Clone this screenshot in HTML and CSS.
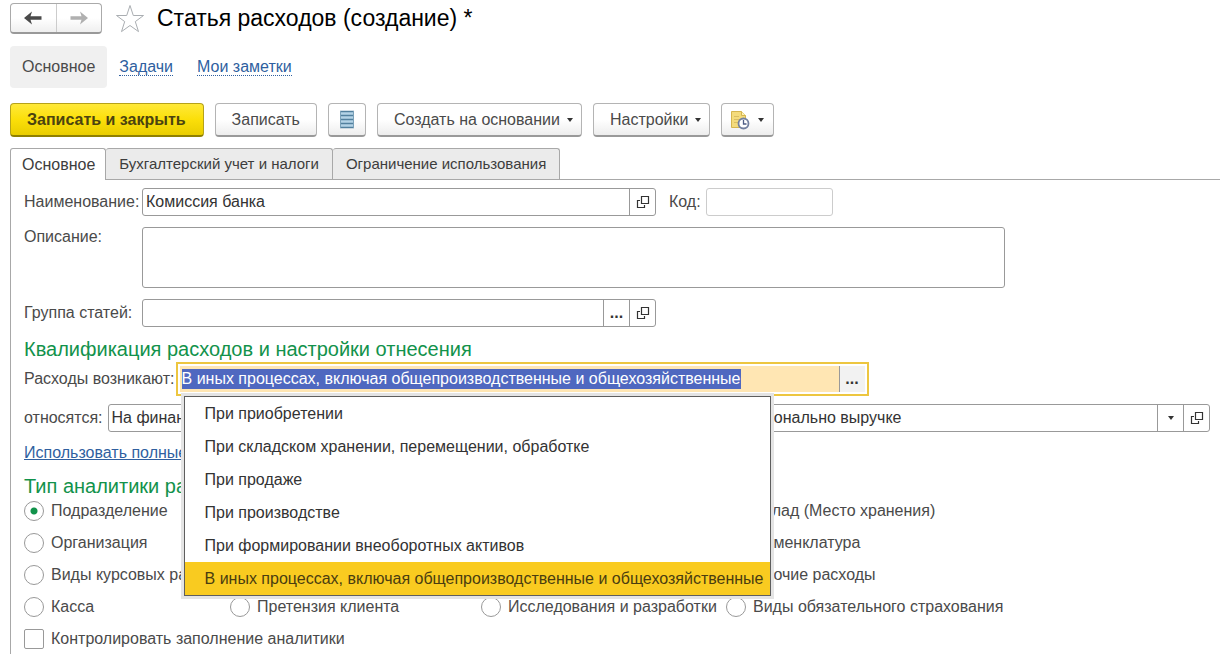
FILE: index.html
```html
<!DOCTYPE html>
<html lang="ru">
<head>
<meta charset="utf-8">
<title>Статья расходов (создание)</title>
<link rel="stylesheet" href="styles.css">
</head>
<body>
<svg class="sprite" aria-hidden="true">
  <symbol id="open" viewBox="0 0 14 14"><path d="M5.500 1.500h7v7h-7zM4 5.500H1.500v7h7V10" fill="none" stroke="#333" stroke-width="1.200"/></symbol>
  <symbol id="caret" viewBox="0 0 8 6"><path d="M1 1h6L4 5z" fill="#333"/></symbol>
</svg>

<header class="titlebar">
  <div class="history">
    <button class="history-btn" type="button" aria-label="Назад">
      <svg width="18" height="14" viewBox="0 0 18 14"><path d="M0 7l8-6.500L6.500 5.300h11v3.400h-11L8 13.500z" fill="#4a4a4a"/></svg>
    </button>
    <button class="history-btn" type="button" aria-label="Вперед">
      <svg width="18" height="14" viewBox="0 0 18 14"><path d="M18 7l-8-6.500 1.500 4.800H.5v3.400h11L10 13.500z" fill="#b0b0b0"/></svg>
    </button>
  </div>
  <button class="star" type="button" aria-label="В избранное">
    <svg width="30" height="29" viewBox="0 0 30 29"><path d="M15 1.500l3.300 10H28.500l-8.200 6.100 3.200 10L15 21.500l-8.500 6.100 3.200-10L1.500 11.500h10.200z" fill="#fff" stroke="#aaaeb2"/></svg>
  </button>
  <h1 class="title">Статья расходов (создание) *</h1>
</header>

<nav class="sections">
  <span class="section-current">Основное</span>
  <a class="section-link" href="#tasks">Задачи</a>
  <a class="section-link" href="#notes">Мои заметки</a>
</nav>

<div class="toolbar">
  <button class="btn btn-primary" type="button">Записать и закрыть</button>
  <button class="btn" type="button">Записать</button>
  <button class="btn btn-icon" type="button" aria-label="Журнал">
    <svg width="14" height="19" viewBox="0 0 14 19"><path d="M1 1h12v17H1z" fill="#b4d3e6"/><path d="M0 1.500h14M0 5.500h14M0 9.500h14M0 13.500h14M0 17.500h14" stroke="#52809e" stroke-width="1.500"/><path d="M.5 1v17M13.500 1v17" stroke="#7ba1b9"/></svg>
  </button>
  <button class="btn btn-menu" type="button">Создать на основании <svg class="caret"><use href="#caret"/></svg></button>
  <button class="btn btn-menu" type="button">Настройки <svg class="caret"><use href="#caret"/></svg></button>
  <button class="btn btn-history" type="button" aria-label="История">
    <svg width="20" height="20" viewBox="0 0 20 20"><path d="M1.500 1.500h10l4 4v12h-14z" fill="#f4db7c" stroke="#d5b54f"/><path d="M11.500 1.500v4h4" fill="#fff3b5" stroke="#d5b54f"/><path d="M4 6.500h5M4 9.500h6M4 12.500h4" stroke="#d9bd62"/><circle cx="13.500" cy="13.500" r="5" fill="#fff" stroke="#73809f" stroke-width="1.800"/><path d="M13.500 10v4h3" fill="none" stroke="#4d5c83" stroke-width="1.300"/></svg>
    <svg class="caret"><use href="#caret"/></svg>
  </button>
</div>

<div class="tabs" role="tablist">
  <button class="tab tab-active" type="button" role="tab" aria-selected="true">Основное</button>
  <button class="tab" type="button" role="tab">Бухгалтерский учет и налоги</button>
  <button class="tab" type="button" role="tab">Ограничение использования</button>
</div>

<main class="panel">
  <div class="row">
    <label class="label label-main" for="name">Наименование:</label>
    <div class="field field-mid">
      <input class="input" id="name" type="text" value="Комиссия банка">
      <button class="cell" type="button" aria-label="Открыть"><svg class="open"><use href="#open"/></svg></button>
    </div>
    <label class="label label-code" for="code">Код:</label>
    <div class="field field-code"><input class="input" id="code" type="text"></div>
  </div>
  <div class="row row-top">
    <label class="label label-main" for="desc">Описание:</label>
    <textarea class="memo" id="desc"></textarea>
  </div>
  <div class="row">
    <label class="label label-main" for="group">Группа статей:</label>
    <div class="field field-mid">
      <input class="input" id="group" type="text">
      <button class="cell dots" type="button" aria-label="Выбрать">...</button>
      <button class="cell" type="button" aria-label="Открыть"><svg class="open"><use href="#open"/></svg></button>
    </div>
  </div>

  <h2 class="heading">Квалификация расходов и настройки отнесения</h2>
  <div class="row row-origin">
    <label class="label" for="origin">Расходы возникают:</label>
    <div class="focus">
      <div class="focus-body">
        <input class="input input-focus" id="origin" type="text" value="В иных процессах, включая общепроизводственные и общехозяйственные">
        <button class="cell dots cell-focus" type="button" aria-label="Выбрать">...</button>
      </div>
      <ul class="popup" role="listbox">
        <li class="option" role="option">При приобретении</li>
        <li class="option" role="option">При складском хранении, перемещении, обработке</li>
        <li class="option" role="option">При продаже</li>
        <li class="option" role="option">При производстве</li>
        <li class="option" role="option">При формировании внеоборотных активов</li>
        <li class="option option-current" role="option" aria-selected="true">В иных процессах, включая общепроизводственные и общехозяйственные</li>
      </ul>
    </div>
  </div>
  <div class="row">
    <label class="label" for="target">относятся:</label>
    <div class="field field-grow"><input class="input" id="target" type="text" value="На финансовый результат"></div>
    <div class="field field-mid">
      <input class="input" type="text" aria-label="Правило" value="Пропорционально выручке">
      <button class="cell" type="button" aria-label="Список"><svg class="caret"><use href="#caret"/></svg></button>
      <button class="cell" type="button" aria-label="Открыть"><svg class="open"><use href="#open"/></svg></button>
    </div>
  </div>
  <a class="full-link" href="#full">Использовать полные</a>

  <h2 class="heading heading-type">Тип аналитики ра</h2>
  <div class="choices">
    <label class="choice c1"><input class="radio" type="radio" name="kind" checked>Подразделение</label>
    <label class="choice c4"><input class="radio" type="radio" name="kind">Склад (Место хранения)</label>
    <label class="choice c1"><input class="radio" type="radio" name="kind">Организация</label>
    <label class="choice c4"><input class="radio" type="radio" name="kind">Номенклатура</label>
    <label class="choice c1"><input class="radio" type="radio" name="kind">Виды курсовых разниц</label>
    <label class="choice c4"><input class="radio" type="radio" name="kind">Прочие расходы</label>
    <label class="choice c1"><input class="radio" type="radio" name="kind">Касса</label>
    <label class="choice c2"><input class="radio" type="radio" name="kind">Претензия клиента</label>
    <label class="choice c3"><input class="radio" type="radio" name="kind">Исследования и разработки</label>
    <label class="choice c4"><input class="radio" type="radio" name="kind">Виды обязательного страхования</label>
  </div>
  <label class="choice"><input class="check" type="checkbox">Контролировать заполнение аналитики</label>
</main>
<script src="app.js"></script>
</body>
</html>
```
FILE: styles.css
```css
* { box-sizing: border-box; }
body {
  margin: 0;
  min-height: 100vh;
  display: flex;
  flex-direction: column;
  background: #fff;
  color: #4a4a4a;
  font: 16px/20px "Liberation Sans", Arial, sans-serif;
}
button, input, textarea { font: inherit; color: inherit; margin: 0; }
button { cursor: pointer; }
.sprite { position: absolute; width: 0; height: 0; }
.caret { width: 8px; height: 6px; flex: none; }
.open { width: 14px; height: 14px; }

.titlebar { display: flex; align-items: center; padding: 3px 10px 0; height: 34px; }
.history {
  display: flex;
  width: 92px;
  height: 31px;
  border: 1px solid #aaa;
  border-bottom: 2px solid #999;
  border-radius: 4px;
  background: linear-gradient(#fff 50%, #efefef);
}
.history-btn {
  flex: 1;
  display: flex;
  align-items: center;
  justify-content: center;
  padding: 0;
  border: 0;
  background: none;
}
.history-btn + .history-btn { border-left: 1px solid #ccc; }
.star { display: flex; margin: 0 12px 0 13px; padding: 0; border: 0; background: none; }
.title { margin: 0; padding-bottom: 2px; font-size: 23px; line-height: 28px; font-weight: 400; color: #000; }

.sections { display: flex; align-items: center; gap: 24px; margin: 12px 10px 0; }
.section-current { margin-right: -12px; padding: 11px 12px; border-radius: 4px; background: #f0f0f0; }
.section-link { color: #2f5f9f; text-decoration: none; border-bottom: 1px dotted #2f5f9f; line-height: 17px; }

.toolbar { display: flex; gap: 11px; margin: 15px 10px 0; }
.btn {
  display: flex;
  align-items: center;
  justify-content: center;
  height: 34px;
  padding: 0 16px;
  border: 1px solid #b4b4b4;
  border-bottom: 2px solid #999;
  border-radius: 4px;
  background: linear-gradient(#fff 50%, #ededed);
  white-space: nowrap;
}
.btn-primary {
  padding-right: 17px;
  border-color: #b5a21a #b5a21a #8f8000;
  background: linear-gradient(#ffe939, #fbdf09 50%, #e9cd00);
  color: #4b4310;
  font-weight: 700;
}
.btn-icon { width: 38px; padding: 0; }
.btn-menu { padding-right: 7px; gap: 6px; }
.btn-history { padding: 0 8px; gap: 7px; }

.tabs { display: flex; margin-top: 11px; margin-left: 10px; border-bottom: 1px solid #a8a8a8; }
.tab {
  height: 31px;
  padding: 0 13px;
  border: 1px solid #a8a8a8;
  border-width: 1px 1px 0 0;
  border-radius: 3px 3px 0 0;
  background: #ebebeb;
  color: #3d3d3d;
  font-size: 15px;
}
.tab-active {
  height: 32px;
  margin-bottom: -1px;
  padding: 0 10px 0 11px;
  border-left-width: 1px;
  background: #fff;
  font-size: 16px;
}

.panel { flex: 1; margin-left: 10px; padding: 8px 10px 0 13px; border-left: 1px solid #a8a8a8; }
.row { display: flex; align-items: center; margin-bottom: 11px; }
.row-top { align-items: flex-start; }
.label { flex: none; margin-right: 5px; }
.label-main { width: 113px; }
.label-code { margin-left: 13px; }
.field {
  display: flex;
  height: 28px;
  border: 1px solid #999;
  border-radius: 3px;
  background: #fff;
  overflow: hidden;
}
.field-mid { width: 514px; }
.field-code { width: 127px; border-color: #ccc; }
.field-grow { flex: 1; margin-right: 10px; }
.input { flex: 1; min-width: 0; padding: 0 3px; border: 0; outline: 0; background: none; color: #333; }
.cell {
  flex: none;
  display: flex;
  align-items: center;
  justify-content: center;
  width: 26px;
  padding: 0;
  border: 0;
  border-left: 1px solid #999;
  background: none;
}
.dots { color: #333; font-weight: 700; }
.memo {
  flex: 0 1 863px;
  height: 61px;
  border: 1px solid #999;
  border-radius: 3px;
  resize: none;
}

.heading { margin: 0 0 2px; font-size: 20px; line-height: 22px; font-weight: 400; color: #12924b; }
.row-origin { margin-bottom: 8px; }
.row-origin .label { margin-right: 1px; }
.focus {
  position: relative;
  width: 693px;
  height: 34px;
  padding: 2px;
  border: 2px solid #edc640;
}
.focus-body { display: flex; height: 26px; background: #ffe6b3; }
.input-focus { padding: 0 2px; }
.input-focus::selection { background: #4f68c0; color: #fff; }
.cell-focus { background: #f2f2f2; }
.popup {
  position: absolute;
  left: 6px;
  top: 32px;
  z-index: 2;
  width: 587px;
  margin: 0;
  padding: 0;
  list-style: none;
  border: 1px solid #5e5e5e;
  background: #fff;
  box-shadow: 0 0 0 3px #e4e4e4;
}
.option { padding: 7px 20px 6px; color: #333; white-space: nowrap; }
.option-current { background: #f9cb20; color: #4a3d10; }

.full-link { display: table; color: #2f5f9f; }
.heading-type { margin: 12px 0 4px; }
.choices { display: grid; grid-template-columns: 206px 251px 245px 1fr; row-gap: 12px; margin-bottom: 12px; }
.c1 { grid-column: 1; }
.c2 { grid-column: 2; }
.c3 { grid-column: 3; }
.c4 { grid-column: 4; }
.choice { display: flex; align-items: center; gap: 7px; white-space: nowrap; }
.radio, .check {
  flex: none;
  appearance: none;
  width: 20px;
  height: 20px;
  border: 1px solid #999;
  background: #fff;
}
.radio { border-radius: 50%; }
.radio:checked { background: radial-gradient(circle, #12924b 3px, #fff 4px); }
.check { border-radius: 2px; }
```
FILE: app.js
```js
const origin = document.getElementById('origin');
origin.focus();
origin.select();
```
